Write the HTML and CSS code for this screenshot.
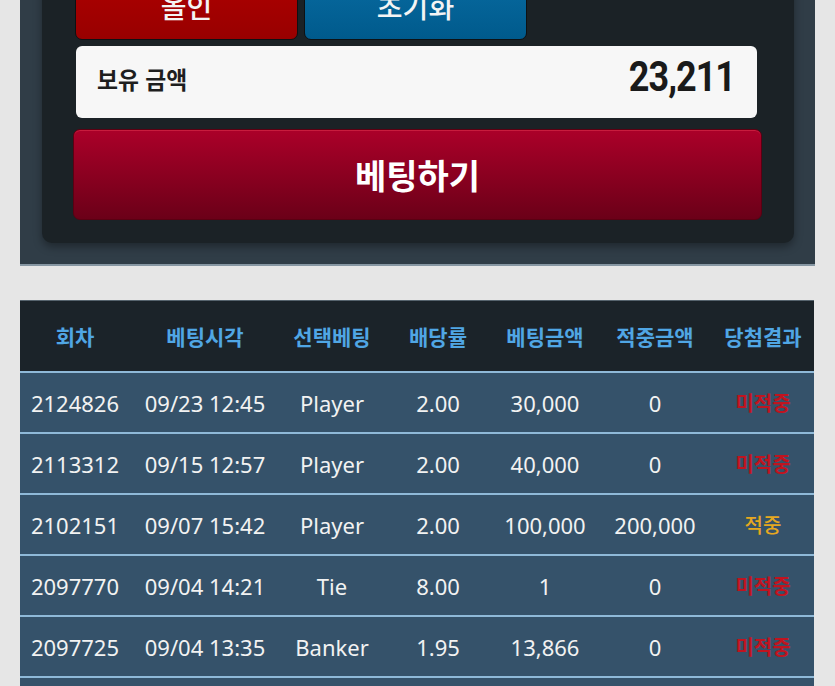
FILE: index.html
```html
<!DOCTYPE html>
<html lang="ko">

<head>
    <meta charset="UTF-8">
    <meta name="viewport" content="width=device-width, initial-scale=1.0">
    <title>베팅</title>
    <link rel="stylesheet" href="styles.css">
</head>

<body>

    <div class="bet-panel">
        <div class="bet-box">
            <div class="quick-buttons">
                <button class="btn-allin">올인</button>
                <button class="btn-reset">초기화</button>
            </div>

            <div class="balance">
                <span class="balance-label">보유 금액</span>
                <span class="balance-value">23,211</span>
            </div>

            <button class="btn-bet">베팅하기</button>
        </div>
    </div>

    <table class="history">
        <colgroup>
            <col style="width: 110px">
            <col style="width: 150px">
            <col style="width: 104px">
            <col style="width: 108px">
            <col style="width: 106px">
            <col style="width: 114px">
            <col style="width: 102px">
        </colgroup>
        <thead>
            <tr>
                <th>회차</th>
                <th>베팅시각</th>
                <th>선택베팅</th>
                <th>배당률</th>
                <th>베팅금액</th>
                <th>적중금액</th>
                <th>당첨결과</th>
            </tr>
        </thead>
        <tbody>
            <tr>
                <td>2124826</td>
                <td>09/23 12:45</td>
                <td>Player</td>
                <td>2.00</td>
                <td>30,000</td>
                <td>0</td>
                <td class="lose">미적중</td>
            </tr>
            <tr>
                <td>2113312</td>
                <td>09/15 12:57</td>
                <td>Player</td>
                <td>2.00</td>
                <td>40,000</td>
                <td>0</td>
                <td class="lose">미적중</td>
            </tr>
            <tr>
                <td>2102151</td>
                <td>09/07 15:42</td>
                <td>Player</td>
                <td>2.00</td>
                <td>100,000</td>
                <td>200,000</td>
                <td class="win">적중</td>
            </tr>
            <tr>
                <td>2097770</td>
                <td>09/04 14:21</td>
                <td>Tie</td>
                <td>8.00</td>
                <td>1</td>
                <td>0</td>
                <td class="lose">미적중</td>
            </tr>
            <tr>
                <td>2097725</td>
                <td>09/04 13:35</td>
                <td>Banker</td>
                <td>1.95</td>
                <td>13,866</td>
                <td>0</td>
                <td class="lose">미적중</td>
            </tr>
            <tr>
                <td>2097700</td>
                <td>09/04 13:10</td>
                <td>Player</td>
                <td>2.00</td>
                <td>10,000</td>
                <td>0</td>
                <td class="lose">미적중</td>
            </tr>
        </tbody>
    </table>

</body>

</html>
```

FILE: styles.css
```css
body {
    margin: 0;
    background-color: #e6e6e6;
    font-family: "Noto Sans", "Noto Sans CJK KR", sans-serif;
    overflow: hidden;
}

/* top betting panel (page is scrolled, top part is out of view) */
.bet-panel {
    margin: -40px 20px 0 20px;
    background-color: #303d47;
    padding: 0 21px 21px 22px;
    border-bottom: 2px solid #8797a3;
}

.bet-box {
    background-color: #1b2226;
    border-radius: 0 0 10px 10px;
    padding: 0 32px 23px 31px;
    box-shadow: 0 4px 8px rgba(0, 0, 0, 0.35);
}

.quick-buttons {
    display: flex;
    gap: 6px;
    margin-left: 2px;
}

.quick-buttons button {
    width: 223px;
    height: 80px;
    border: 1px solid #0d1114;
    border-radius: 7px;
    color: #f4f4f4;
    font-family: "Noto Sans CJK KR", sans-serif;
    font-size: 28px;
    font-weight: 500;
    padding: 0;
    line-height: 1;
    padding-top: 12px;
}

.btn-allin {
    background: linear-gradient(#b30000, #980000);
}

.btn-reset {
    background: linear-gradient(#0a6fa6, #005a8c);
}

.balance {
    margin: 6px 5px 0 3px;
    height: 72px;
    background-color: #f7f7f7;
    border-radius: 6px;
    display: flex;
    align-items: center;
    justify-content: space-between;
    padding: 0 22px 0 21px;
}

.balance-label {
    font-family: "Noto Sans CJK KR", sans-serif;
    font-size: 24px;
    font-weight: 700;
    color: #1e1e1e;
    margin-top: -8px;
    display: inline-block;
    transform: scaleX(0.95);
    transform-origin: left center;
}

.balance-value {
    font-family: Roboto, sans-serif;
    font-size: 36px;
    font-weight: 700;
    color: #1a1a1a;
    letter-spacing: -1px;
    margin-top: -10px;
    display: inline-block;
    transform: scaleY(1.2);
}

.btn-bet {
    display: block;
    width: 100%;
    height: 91px;
    margin-top: 11px;
    background: linear-gradient(#ab0029, #6b0018);
    border: 1px solid #5a0012;
    border-radius: 7px;
    color: #ffffff;
    font-family: "Noto Sans CJK KR", sans-serif;
    font-size: 34px;
    font-weight: 700;
    box-shadow: inset 0 1px 0 rgba(255, 80, 100, 0.35);
}

/* betting history */
.history {
    margin: 34px 20px 0 20px;
    width: 794px;
    table-layout: fixed;
    border-collapse: collapse;
    text-align: center;
}

.history th {
    height: 70px;
    background-color: #1b2329;
    border-top: 1px solid #56636d;
    color: #50a6e4;
    font-family: "Noto Sans CJK KR", sans-serif;
    font-size: 21px;
    font-weight: 700;
    padding: 0;
}

.history td {
    height: 59px;
    background-color: #35526a;
    border-top: 2px solid #8fb9d8;
    color: #f2f2f2;
    font-size: 22px;
    padding: 0;
    white-space: nowrap;
}

.history td.lose {
    color: #c0141f;
    font-family: "Noto Sans CJK KR", sans-serif;
    font-size: 20px;
    font-weight: 700;
}

.history td.win {
    color: #e6a81f;
    font-family: "Noto Sans CJK KR", sans-serif;
    font-size: 20px;
    font-weight: 500;
}
```
